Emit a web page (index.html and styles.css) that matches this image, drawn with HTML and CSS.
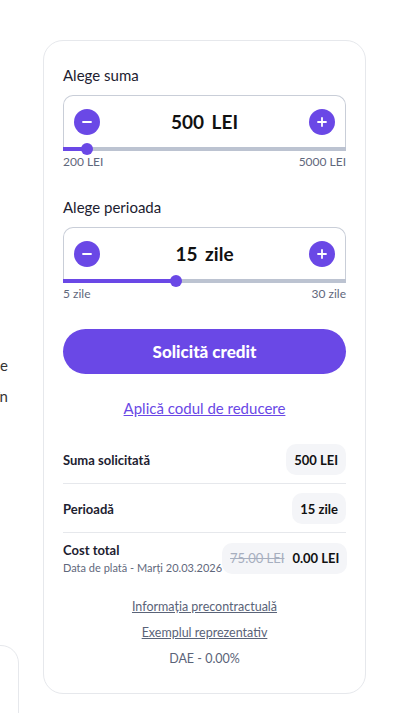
FILE: index.html
```html
<!DOCTYPE html>
<html lang="ro">
<head>
    <meta charset="UTF-8">
    <meta name="viewport" content="width=device-width, initial-scale=1.0">
    <title>Credit rapid</title>
    <link rel="stylesheet" href="styles.css">
</head>
<body>
    <div class="page">
        <div class="side">
            <div class="side-text">
                <div class="side-line">Bani pe card oricând ai nevoie</div>
                <div class="side-line">Aprobare rapidă, fără acte, în</div>
            </div>
            <div class="side-card"></div>
        </div>

        <div class="calc">
            <div class="field">
                <div class="field-label">Alege suma</div>
                <div class="stepper">
                    <div class="stepper-row">
                        <button class="round-btn" type="button">
                            <svg width="12" height="12" viewBox="0 0 12 12"><path d="M2 6h8" stroke="#fff" stroke-width="1.8" stroke-linecap="round"/></svg>
                        </button>
                        <div class="stepper-value">500 LEI</div>
                        <button class="round-btn" type="button">
                            <svg width="12" height="12" viewBox="0 0 12 12"><path d="M2 6h8M6 2v8" stroke="#fff" stroke-width="1.8" stroke-linecap="round"/></svg>
                        </button>
                    </div>
                    <div class="track">
                        <div class="track-fill" style="width: 8.5%"></div>
                        <div class="track-thumb" style="left: 8.5%"></div>
                    </div>
                </div>
                <div class="range-labels">
                    <span>200 LEI</span>
                    <span>5000 LEI</span>
                </div>
            </div>

            <div class="field">
                <div class="field-label">Alege perioada</div>
                <div class="stepper">
                    <div class="stepper-row">
                        <button class="round-btn" type="button">
                            <svg width="12" height="12" viewBox="0 0 12 12"><path d="M2 6h8" stroke="#fff" stroke-width="1.8" stroke-linecap="round"/></svg>
                        </button>
                        <div class="stepper-value">15 zile</div>
                        <button class="round-btn" type="button">
                            <svg width="12" height="12" viewBox="0 0 12 12"><path d="M2 6h8M6 2v8" stroke="#fff" stroke-width="1.8" stroke-linecap="round"/></svg>
                        </button>
                    </div>
                    <div class="track">
                        <div class="track-fill" style="width: 40%"></div>
                        <div class="track-thumb" style="left: 40%"></div>
                    </div>
                </div>
                <div class="range-labels">
                    <span>5 zile</span>
                    <span>30 zile</span>
                </div>
            </div>

            <button class="submit-btn" type="button">Solicită credit</button>
            <a href="#" class="promo-link">Aplică codul de reducere</a>

            <div class="summary">
                <div class="summary-row">
                    <div class="summary-name">Suma solicitată</div>
                    <div class="pill">500 LEI</div>
                </div>
                <div class="summary-row">
                    <div class="summary-name">Perioadă</div>
                    <div class="pill">15 zile</div>
                </div>
                <div class="summary-row">
                    <div>
                        <div class="summary-name">Cost total</div>
                        <div class="summary-sub">Data de plată - Marți 20.03.2026</div>
                    </div>
                    <div class="pill"><s class="old-price">75.00 LEI</s> 0.00 LEI</div>
                </div>
            </div>

            <div class="legal">
                <a href="#">Informația precontractuală</a>
                <a href="#">Exemplul reprezentativ</a>
                <span>DAE - 0.00%</span>
            </div>
        </div>
    </div>
</body>
</html>
```

FILE: styles.css
```css
body {
    margin: 0;
    font-family: Lato, "Noto Sans", sans-serif;
    background: #fff;
    color: #1d2130;
    overflow: hidden;
}
.page {
    display: flex;
    align-items: flex-start;
    gap: 24px;
    padding-top: 40px;
}

.side {
    width: 300px;
    margin-left: -281px;
    flex-shrink: 0;
    display: flex;
    flex-direction: column;
    overflow: hidden;
}
.side-text {
    margin-top: 310px;
    padding-right: 11px;
    font-size: 15px;
    line-height: 31px;
    color: #333;
}
.side-line {
    white-space: nowrap;
    text-align: right;
}
.side-card {
    margin-top: 233px;
    height: 90px;
    border: 1px solid #e6e8ec;
    border-radius: 18px;
}

.calc {
    width: 283px;
    flex-shrink: 0;
    border: 1px solid #e6e8ec;
    border-radius: 20px;
    padding: 24px 19px 26px;
    display: flex;
    flex-direction: column;
}
.field-label {
    font-size: 15px;
    line-height: 20px;
    color: #1d2130;
    margin-bottom: 10px;
}
.field + .field {
    margin-top: 28px;
}
.stepper {
    border: 1px solid #c9ced8;
    border-bottom: none;
    border-radius: 10px 10px 0 0;
}
.stepper-row {
    display: flex;
    align-items: center;
    justify-content: space-between;
    height: 51px;
    padding: 0 10px;
}
.round-btn {
    width: 26px;
    height: 26px;
    border-radius: 50%;
    border: none;
    padding: 0;
    background: #6a48e6;
    display: flex;
    align-items: center;
    justify-content: center;
    cursor: pointer;
}
.stepper-value {
    font-size: 19px;
    font-weight: 700;
    color: #111;
    word-spacing: 3px;
}
.track {
    position: relative;
    height: 4px;
    margin: 0 -1px;
    background: #bcc3d1;
}
.track-fill {
    height: 100%;
    background: #6a48e6;
}
.track-thumb {
    position: absolute;
    top: -4px;
    width: 12px;
    height: 12px;
    margin-left: -6px;
    border-radius: 50%;
    background: #6a48e6;
}
.range-labels {
    display: flex;
    justify-content: space-between;
    margin-top: 4px;
    font-size: 12px;
    line-height: 14px;
    color: #5f687c;
}

.submit-btn {
    margin-top: 28px;
    height: 45px;
    border: none;
    border-radius: 23px;
    background: #6a48e6;
    color: #fff;
    font-family: inherit;
    font-size: 17px;
    font-weight: 900;
    cursor: pointer;
}
.promo-link {
    margin-top: 24px;
    text-align: center;
    font-size: 15px;
    line-height: 20px;
    color: #6a48e6;
}

.summary {
    margin-top: 26px;
}
.summary-row {
    display: flex;
    align-items: center;
    justify-content: space-between;
    padding-bottom: 8px;
    border-bottom: 1px solid #e6e8ec;
    margin-bottom: 9px;
}
.summary-row:last-child {
    border-bottom: none;
    margin-bottom: 0;
    padding-bottom: 0;
}
.summary-name {
    font-size: 13px;
    font-weight: 700;
    color: #1d2130;
}
.summary-sub {
    margin-top: 3px;
    font-size: 11px;
    color: #5f687c;
    white-space: nowrap;
}
.pill {
    height: 31px;
    padding: 0 8px;
    border-radius: 10px;
    background: #f4f5f8;
    display: flex;
    align-items: center;
    gap: 8px;
    font-size: 13px;
    font-weight: 700;
    color: #111;
    white-space: nowrap;
}
.old-price {
    color: #a7afbf;
    font-weight: 400;
}

.legal {
    margin-top: 25px;
    display: flex;
    flex-direction: column;
    align-items: center;
    gap: 10px;
    font-size: 12.5px;
    line-height: 16px;
    color: #5a6378;
}
.legal a {
    color: #5a6378;
}
```
